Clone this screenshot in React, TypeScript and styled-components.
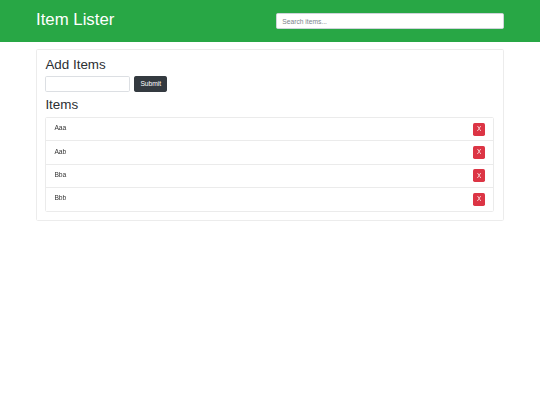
import styled, { createGlobalStyle } from 'styled-components';

const GlobalStyle = createGlobalStyle`
  * {
    box-sizing: border-box;
  }
  body {
    margin: 0;
    background: #fff;
    font-family: 'Liberation Sans', Arial, sans-serif;
    color: #212529;
    -webkit-font-smoothing: antialiased;
  }
`;

const Header = styled.header`
  height: 42px;
  background-color: #28a745;
`;

const Container = styled.div`
  width: 480.6px;
  margin: 0 auto;
  padding: 0 6.3px;
`;

const HeaderRow = styled(Container)`
  display: grid;
  grid-template-columns: 1fr 1fr;
  column-gap: 12.6px;
  align-items: center;
  height: 100%;
`;

const Title = styled.h1`
  margin: 0 0 1px;
  font-size: 16.8px;
  font-weight: 400;
  line-height: 1.2;
  color: #fff;
`;

const SearchInput = styled.input`
  width: 100%;
  height: 15.6px;
  padding: 0 5px;
  border: 1px solid #ced4da;
  border-radius: 1.7px;
  font-family: inherit;
  font-size: 6.7px;
  color: #495057;
  outline: none;
  &::placeholder {
    color: #7d848b;
  }
`;

const Card = styled.section`
  margin-top: 7px;
  padding: 7.4px 8.4px 8.4px;
  border: 1px solid #ececec;
  border-radius: 1.7px;
`;

const Heading = styled.h2<{ $gap: number }>`
  margin: 0 0 ${(p) => p.$gap}px;
  font-size: 13.4px;
  font-weight: 400;
  line-height: 1.2;
  color: #2b2f33;
`;

const AddForm = styled.form`
  display: flex;
  align-items: center;
  gap: 4px;
  margin-bottom: 5.3px;
`;

const TextInput = styled.input`
  width: 85px;
  height: 16px;
  padding: 0 5px;
  border: 1px solid #dcdfe3;
  border-radius: 1.7px;
  font-family: inherit;
  font-size: 6.7px;
  outline: none;
`;

const SubmitButton = styled.button`
  height: 16px;
  padding: 0 5px;
  border: 1px solid #343a40;
  border-radius: 1.7px;
  background-color: #343a40;
  color: #fff;
  font-family: inherit;
  font-size: 6.7px;
  line-height: 1;
`;

const List = styled.ul`
  margin: 0;
  padding: 0;
  list-style: none;
  will-change: transform;
`;

const Row = styled.li`
  display: flex;
  justify-content: space-between;
  align-items: flex-start;
  padding: 4.7px 8.4px;
  border: 1px solid #ebebeb;
  margin-bottom: -1px;
  font-size: 6.7px;
  line-height: 10px;
  color: #333;
  &:first-child {
    border-top-left-radius: 1.7px;
    border-top-right-radius: 1.7px;
  }
  &:last-child {
    margin-bottom: 0;
    border-bottom-left-radius: 1.7px;
    border-bottom-right-radius: 1.7px;
  }
`;

const ItemName = styled.span`
  padding-top: 0.5px;
`;

const DeleteButton = styled.button`
  width: 11.6px;
  height: 13px;
  padding: 0;
  border: none;
  border-radius: 1.7px;
  background-color: #dc3545;
  color: #fff;
  font-family: inherit;
  font-size: 6.3px;
  line-height: 1;
`;

const items = ['Aaa', 'Aab', 'Bba', 'Bbb'];

const App = () => (
  <>
    <GlobalStyle />
    <Header>
      <HeaderRow>
        <Title>Item Lister</Title>
        <SearchInput type="text" placeholder="Search items..." />
      </HeaderRow>
    </Header>
    <Container>
      <Card>
        <Heading $gap={2.6}>Add Items</Heading>
        <AddForm onSubmit={(e) => e.preventDefault()}>
          <TextInput type="text" />
          <SubmitButton type="submit">Submit</SubmitButton>
        </AddForm>
        <Heading $gap={3.4}>Items</Heading>
        <List>
          {items.map((item) => (
            <Row key={item}>
              <ItemName>{item}</ItemName>
              <DeleteButton type="button">X</DeleteButton>
            </Row>
          ))}
        </List>
      </Card>
    </Container>
  </>
);

export default App;
